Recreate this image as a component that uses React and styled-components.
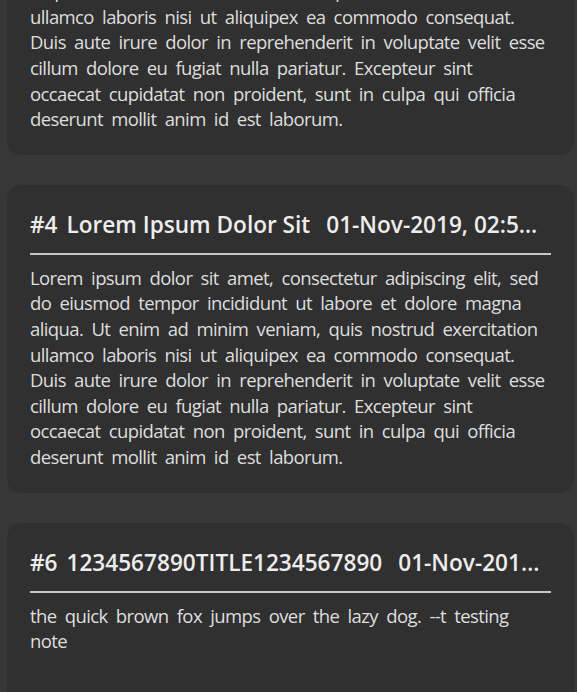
import * as React from 'react';
import styled, { createGlobalStyle } from 'styled-components';

const LOREM =
    "Lorem ipsum dolor sit amet, consectetur adipiscing elit, sed do eiusmod tempor incididunt ut labore et dolore magna aliqua. Ut enim ad minim veniam, quis nostrud exercitation ullamco laboris nisi ut aliquipex ea commodo consequat. Duis aute irure dolor in reprehenderit in voluptate velit esse cillum dolore eu fugiat nulla pariatur. Excepteur sint occaecat cupidatat non proident, sunt in culpa qui officia deserunt mollit anim id est laborum.";

const notes = [
    { id: 3, title: "Lorem Ipsum Dolor Sit", date: "01-Nov-2019, 02:50 PM", body: LOREM },
    { id: 4, title: "Lorem Ipsum Dolor Sit", date: "01-Nov-2019, 02:55 PM", body: LOREM },
    { id: 6, title: "1234567890TITLE1234567890", date: "01-Nov-2019, 03:10 PM", body: "the quick brown fox jumps over the lazy dog. --t testing note" },
];

const NoteCard = ({ note }) => (
    <Card>
        <Title>
            <IdTag>#{note.id}</IdTag>
            {note.title}
            <DateText>{note.date}</DateText>
        </Title>
        <Divider />
        <Body>{note.body}</Body>
    </Card>
);

const App = () => {
    const listRef = React.useRef(null);

    // the page is shown scrolled part way down the list
    React.useLayoutEffect(() => {
        if (listRef.current) listRef.current.scrollTop = 168;
    }, []);

    return (
        <>
            <GlobalStyle />
            <List ref={listRef}>
                {notes.map((n) => <NoteCard key={n.id} note={n} />)}
            </List>
        </>
    );
};

const GlobalStyle = createGlobalStyle`
    html, body {
        margin: 0;
        padding: 0;
        background: #373737;
    }
    body {
        font-family: "Open Sans", "Noto Sans", sans-serif;
    }
`;

const List = styled.div`
    height: 100vh;
    overflow: hidden;
    display: flex;
    flex-direction: column;
    gap: 30px;
    padding: 15px 3px 15px 7px;
    box-sizing: border-box;
`;

const Card = styled.div`
    flex-shrink: 0;
    background: #303030;
    border-radius: 14px;
    padding: 24px 23px 23px;
    min-height: 200px;
    box-sizing: border-box;
`;

const Title = styled.div`
    color: #ededed;
    font-size: 22.6px;
    font-weight: 600;
    line-height: 32px;
    white-space: nowrap;
    overflow: hidden;
    text-overflow: ellipsis;
    padding-right: 4px;
`;

const IdTag = styled.span`
    margin-right: 9px;
`;

const DateText = styled.span`
    margin-left: 16px;
`;

const Divider = styled.div`
    height: 2px;
    background: #c6c6c6;
    margin: 12px 0 10px;
`;

const Body = styled.p`
    margin: 0;
    padding-right: 4px;
    color: #dedede;
    font-size: 18.5px;
    letter-spacing: -0.6px;
    word-spacing: 4px;
    line-height: 25.6px;
`;

export default App;
